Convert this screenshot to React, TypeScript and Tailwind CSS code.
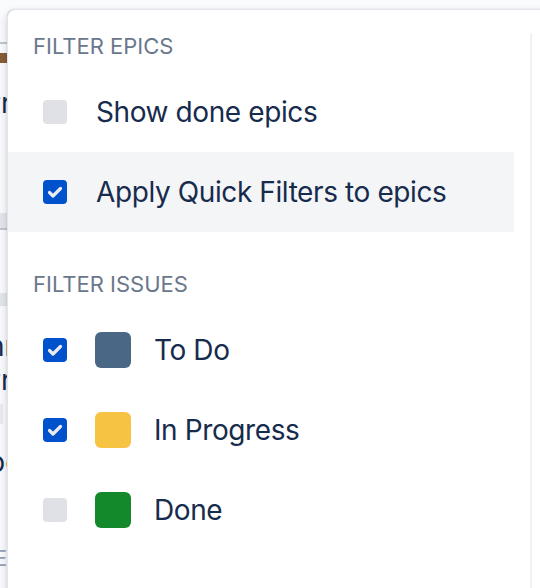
import React from "react";

function Check({ checked }: { checked: boolean }) {
  if (!checked) {
    return <div className="w-[24px] h-[24px] rounded-[4px] bg-[#dfe1e6] shrink-0" />;
  }
  return (
    <div className="w-[24px] h-[24px] rounded-[4px] bg-[#0052cc] shrink-0 flex items-center justify-center">
      <svg width="24" height="24" viewBox="0 0 24 24">
        <path d="M6.5 12.5 L10 16 L17.5 8.5" fill="none" stroke="#ebecf0" strokeWidth="3.2" strokeLinecap="round" strokeLinejoin="round" />
      </svg>
    </div>
  );
}

function EpicRow({ label, checked, active }: { label: string; checked: boolean; active?: boolean }) {
  return (
    <div className={`h-[80px] flex items-center pl-[35px] ${active ? "bg-[#f4f5f7]" : ""}`}>
      <Check checked={checked} />
      <span className="ml-[29px] text-[28px] leading-[32px] tracking-[-0.4px] text-[#172b4d]">{label}</span>
    </div>
  );
}

function IssueRow({ label, checked, color }: { label: string; checked: boolean; color: string }) {
  return (
    <div className="h-[80px] flex items-center pl-[35px]">
      <Check checked={checked} />
      <div className={`ml-[28px] w-[36px] h-[36px] rounded-[6px] shrink-0 ${color}`} />
      <span className="ml-[23px] text-[28px] leading-[32px] tracking-[-0.4px] text-[#172b4d]">{label}</span>
    </div>
  );
}

export default function App() {
  return (
    <div className="relative w-[540px] h-[588px] overflow-hidden bg-white font-['Inter',sans-serif]">
      {/* page underneath */}
      <div className="absolute inset-0 flex flex-col bg-[#fafbfc]">
        <div className="h-[42px]" />
        <div className="h-[2px] bg-[#c1c7d0]" />
        <div className="h-[9px]" />
        <div className="h-[10px] bg-[#8a5d36]" />
        <div className="h-[28px]" />
        <div className="h-[24px] text-[28px] leading-[24px] text-[#172b4d] pl-0 -ml-[10px]">rr</div>
        <div className="h-[98px]" />
        <div className="h-[15px] bg-[#e4e6ea]" />
        <div className="h-[2px] bg-[#c1c7d0]" />
        <div className="h-[63px]" />
        <div className="h-[13px] bg-[#e4e6ea]" />
        <div className="h-[30px]" />
        <div className="h-[20px] text-[28px] leading-[20px] text-[#172b4d] -ml-[12px]">nn</div>
        <div className="h-[14px]" />
        <div className="h-[20px] text-[28px] leading-[20px] text-[#172b4d] -ml-[10px]">rr</div>
        <div className="h-[14px]" />
        <div className="h-[20px] w-[3px] bg-[#ebecf0]" />
        <div className="h-[28px]" />
        <div className="h-[20px] text-[28px] leading-[20px] text-[#172b4d] -ml-[12px]">bo</div>
        <div className="h-[76px]" />
        <div className="h-[20px] text-[22px] leading-[20px] text-[#97a0af] -ml-[6px]">EA</div>
      </div>

      {/* popup */}
      <div className="absolute left-[7px] top-[9px] w-[620px] h-[640px] bg-white rounded-[8px] border border-[#e4e6ea] shadow-[0_4px_10px_rgba(9,30,66,0.18),0_0_1px_rgba(9,30,66,0.3)]">
        <div className="absolute left-[522px] top-[23px] w-[2px] h-[600px] bg-[#f0f1f3]" />
        <div className="w-[506px] flex flex-col">
          <div className="h-[62px] pt-[10px] flex items-center pl-[25px] text-[22px] leading-[24px] text-[#6b778c]">FILTER EPICS</div>
          <EpicRow label="Show done epics" checked={false} />
          <EpicRow label="Apply Quick Filters to epics" checked={true} active />
          <div className="h-[78px] pt-[26px] flex items-center pl-[25px] text-[22px] leading-[24px] text-[#6b778c]">FILTER ISSUES</div>
          <IssueRow label="To Do" checked={true} color="bg-[#4a6785]" />
          <IssueRow label="In Progress" checked={true} color="bg-[#f6c342]" />
          <IssueRow label="Done" checked={false} color="bg-[#14892c]" />
        </div>
      </div>
    </div>
  );
}
